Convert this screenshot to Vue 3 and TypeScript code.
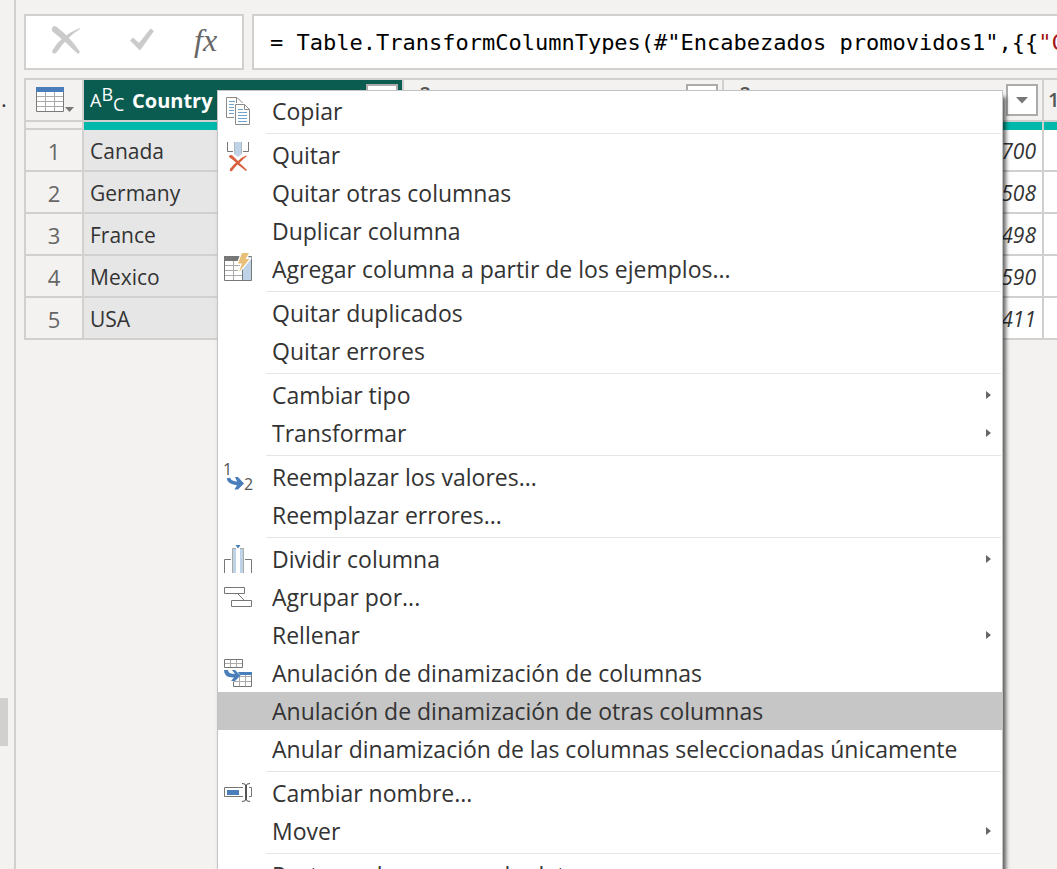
<script setup lang="ts">
interface MenuItem {
  label: string
  icon?: string
  submenu?: boolean
  active?: boolean
}

const formulaStart = '= Table.TransformColumnTypes(#"Encabezados promovidos1",{{'
const formulaString = '"Country"'

const groups: MenuItem[][] = [
  [{ label: 'Copiar', icon: 'copy' }],
  [
    { label: 'Quitar', icon: 'remove' },
    { label: 'Quitar otras columnas' },
    { label: 'Duplicar columna' },
    { label: 'Agregar columna a partir de los ejemplos...', icon: 'examples' },
  ],
  [{ label: 'Quitar duplicados' }, { label: 'Quitar errores' }],
  [
    { label: 'Cambiar tipo', submenu: true },
    { label: 'Transformar', submenu: true },
  ],
  [{ label: 'Reemplazar los valores...', icon: 'replace' }, { label: 'Reemplazar errores...' }],
  [
    { label: 'Dividir columna', icon: 'split', submenu: true },
    { label: 'Agrupar por...', icon: 'group' },
    { label: 'Rellenar', submenu: true },
    { label: 'Anulación de dinamización de columnas', icon: 'unpivot' },
    { label: 'Anulación de dinamización de otras columnas', active: true },
    { label: 'Anular dinamización de las columnas seleccionadas únicamente' },
  ],
  [
    { label: 'Cambiar nombre...', icon: 'rename' },
    { label: 'Mover', submenu: true },
  ],
  [{ label: 'Rastrear desagrupando datos' }],
]

const rows = [
  { country: 'Canada', value: '700' },
  { country: 'Germany', value: '508' },
  { country: 'France', value: '498' },
  { country: 'Mexico', value: '590' },
  { country: 'USA', value: '411' },
]
</script>

<template>
  <div class="app">
    <aside class="side">
      <span class="side-text">.</span>
      <div class="thumb"></div>
    </aside>
    <main class="main">
      <div class="bar">
        <div class="tools">
          <button type="button" aria-label="Cancelar">
            <svg width="36" height="32" viewBox="0 0 36 32">
              <path d="M4 4Q6 0 10 4Q23 14 32 28L30 30Q18 18 4 7ZM32 5Q18 14 9 28Q5 32 4 27Q13 11 32 4Z" fill="#cbcbcb" />
            </svg>
          </button>
          <button type="button" aria-label="Aceptar">
            <svg width="30" height="32" viewBox="0 0 30 32">
              <path d="M6 16.500L9 13.500L15 19L26.500 4.500L30 7L16 26.500Z" fill="#cbcbcb" />
            </svg>
          </button>
          <button type="button" class="fx" aria-label="Insertar paso">fx</button>
        </div>
        <div class="formula" role="textbox" aria-label="Fórmula"><code>{{ formulaStart }}<span class="str">{{ formulaString }}</span></code></div>
      </div>

      <table class="grid">
        <colgroup>
          <col class="c-index" /><col class="c-data" /><col class="c-data" /><col class="c-data" /><col class="c-data" />
        </colgroup>
        <thead>
          <tr class="head">
            <th>
              <button type="button" class="corner" aria-label="Opciones de tabla">
                <svg width="40" height="28" viewBox="0 0 40 28">
                  <path d="M2.500 2.500H29.500V25.500H2.500Z" fill="#fff" stroke="#7a7a7a" />
                  <path d="M3 10.500H29M3 15.500H29M3 20.500H29M11.500 6V25M20.500 6V25" stroke="#aaa" fill="none" />
                  <path d="M2 1H30V6H2Z" fill="#4a7ebb" />
                  <path d="M31 21H40L35.500 26Z" fill="#777" />
                </svg>
              </button>
            </th>
            <th class="selected">
              <div class="cell-head">
                <span class="type"><i>A</i><i class="up">B</i><i class="down">C</i></span>
                <span class="name">Country</span>
                <button type="button" class="drop" aria-label="Filtrar Country"></button>
              </div>
            </th>
            <th v-for="n in 3" :key="n">
              <div class="cell-head">
                <span class="type num"><i>1</i><i class="up">2</i><i class="down">3</i></span>
                <button type="button" class="drop" aria-label="Filtrar columna">
                  <svg width="12" height="7" viewBox="0 0 12 7"><path d="M0 0H12L6 6.500Z" fill="#777" /></svg>
                </button>
              </div>
            </th>
          </tr>
          <tr class="quality">
            <td></td><td></td><td></td><td></td><td></td>
          </tr>
        </thead>
        <tbody>
          <tr v-for="(row, i) in rows" :key="row.country">
            <th scope="row">{{ i + 1 }}</th>
            <td class="picked">{{ row.country }}</td>
            <td></td>
            <td class="value">{{ row.value }}</td>
            <td></td>
          </tr>
        </tbody>
      </table>
    </main>

    <div class="menu" role="menu">
      <div v-for="(group, g) in groups" :key="g" class="group" role="group">
        <button
          v-for="item in group"
          :key="item.label"
          type="button"
          role="menuitem"
          class="item"
          :class="{ active: item.active }"
        >
          <svg class="icon" width="36" height="38" viewBox="0 0 36 38" fill="none">
            <g v-if="item.icon === 'copy'">
              <path d="M6.500 5.500H17L22.500 11V25.500H6.500Z" fill="#fff" stroke="#8a8a8a" />
              <path d="M16.500 5.500V11.500H22" stroke="#8a8a8a" />
              <path d="M9 9.500H15M9 12.500H15M9 15.500H15M9 18.500H15M9 21.500H15" stroke="#6fa3d0" />
              <path d="M15 12H25L30 17.500V33H15Z" fill="#fff" stroke="#fff" stroke-width="2" />
              <path d="M15.500 12.500H24.500L29.500 17.500V32.500H15.500Z" fill="#fff" stroke="#8a8a8a" />
              <path d="M24.500 12.500V17.500H29.500" stroke="#8a8a8a" />
              <path d="M18 17.500H23M18 20.500H27M18 23.500H27M18 26.500H27M18 29.500H27" stroke="#6fa3d0" />
            </g>
            <g v-else-if="item.icon === 'remove'">
              <path d="M7.500 6V15.500H13M28.500 6V15.500H23" stroke="#777" />
              <path d="M14 6H22V18L18 21L14 18Z" fill="#bfd3e8" />
              <path d="M14.500 6V17M21.500 6V17" stroke="#b0b8c0" />
              <path d="M9 20Q11 18 13 20L18 25Q22 21 26 19.500L27 20Q23 23 19.500 27Q24 31 27 34L26 35Q21 31 17.500 28.500Q14 32 12 35Q9 36 10 33Q13 29 16 26.500Q12 23 9 21Z" fill="#d9603f" />
            </g>
            <g v-else-if="item.icon === 'examples'">
              <path d="M4.500 6.500H31.500V30.500H4.500Z" fill="#fff" stroke="#777" />
              <path d="M22 7H31V30H22Z" fill="#bfd3e8" />
              <path d="M5 15.500H22M5 20.500H22M5 25.500H22M13.500 11V30" stroke="#aaa" />
              <path d="M22.500 11V30" stroke="#777" />
              <path d="M4 6H22V11H4Z" fill="#777" />
              <path d="M22 3H29L25.500 9H29.500L19 22L22 13.500H18Z" fill="#e8bf78" stroke="#fff" stroke-width="2.500" paint-order="stroke" />
            </g>
            <g v-else-if="item.icon === 'replace'">
              <text x="3" y="17" class="digit">1</text>
              <text x="24" y="32" class="digit">2</text>
              <path d="M8.500 20Q9 25.500 21 25.500" stroke="#4a7ebb" stroke-width="3.500" />
              <path d="M15 19H18L24 25.500L18 31.500H14.500L18 25.500Z" fill="#4a7ebb" />
            </g>
            <g v-else-if="item.icon === 'split'">
              <path d="M4.500 33V19.500H11M31.500 33V19.500H25" stroke="#777" />
              <path d="M12 8H16V33H12ZM20 8H24V33H20Z" fill="#bfd3e8" />
              <path d="M12.500 33V8.500H16M23.500 33V8.500H20" stroke="#aaa" />
              <path d="M15.500 5H20.500L18 8.500Z" fill="#4a7ebb" />
            </g>
            <g v-else-if="item.icon === 'group'" stroke="#777">
              <path d="M4.500 9.500H24.500V15.500H4.500ZM11.500 22.500H31.500V28.500H11.500ZM18 16L24.500 22.500" />
            </g>
            <g v-else-if="item.icon === 'unpivot'">
              <path d="M4.500 5.500H22.500V13.500H4.500Z" fill="#fff" stroke="#777" />
              <path d="M5 9.500H22M10.500 6V13M16.500 6V13" stroke="#aaa" />
              <path d="M13.500 27.500V32.500H31.500V19" stroke="#777" />
              <path d="M19 22.500H31M14 27.500H31M19.500 21V32M25.500 21V32" stroke="#aaa" />
              <path d="M18 18H32V21H20Z" fill="#4a7ebb" />
              <path d="M4 16H8Q8 20 15 20L12 16H15L20.500 21.500L15 27H11L14 23.500Q4 24 4 16Z" fill="#4a7ebb" />
            </g>
            <g v-else-if="item.icon === 'rename'">
              <path d="M23 13.500H4.500V22.500H23M29 13.500H31.500V22.500H29" stroke="#777" />
              <path d="M7 16H19V21H7Z" fill="#4a7ebb" />
              <path d="M26 11V26" stroke="#555" stroke-width="2" />
              <path d="M22 9.500Q26 9.500 26 12Q26 9.500 30 9.500M22 27.500Q26 27.500 26 25Q26 27.500 30 27.500" stroke="#555" />
            </g>
          </svg>
          <span class="label">{{ item.label }}</span>
          <svg v-if="item.submenu" width="5" height="8" viewBox="0 0 5 8"><path d="M0 0L5 4L0 8Z" fill="#666" /></svg>
        </button>
      </div>
    </div>
  </div>
</template>

<style>
body {
  margin: 0;
  background: #f3f2f0;
}
</style>

<style scoped>
* {
  box-sizing: border-box;
}
button {
  margin: 0;
  padding: 0;
  border: 0;
  background: none;
  font: inherit;
  color: inherit;
}
.app {
  position: relative;
  display: flex;
  height: 100vh;
  overflow: hidden;
  background: #f3f2f0;
  font-family: "Open Sans", "Noto Sans", sans-serif;
  color: #333;
}
.side {
  position: relative;
  flex: 0 0 16px;
  border-right: 2px solid #d1d0ce;
  padding-top: 82px;
  font-size: 22px;
  line-height: 32px;
}
.side-text {
  padding-left: 1px;
}
.thumb {
  position: absolute;
  left: 0;
  top: 698px;
  width: 8px;
  height: 48px;
  background: #d1d0ce;
}
.main {
  flex: 1;
  min-width: 0;
  overflow: hidden;
  padding: 14px 0 0 8px;
}
.bar {
  display: flex;
  gap: 8px;
  height: 56px;
  margin-bottom: 8px;
}
.tools {
  flex: 0 0 220px;
  display: flex;
  gap: 40px;
  align-items: center;
  padding: 0 0 4px 22px;
  border: 2px solid #d1d0ce;
  background: #fff;
}
.tools svg {
  display: block;
}
.fx {
  font: italic 32px/36px "Liberation Serif", serif;
  color: #666;
}
.formula {
  flex: 1;
  min-width: 0;
  overflow: hidden;
  border: 2px solid #d1d0ce;
  border-right: 0;
  background: #fff;
  padding-left: 16px;
  line-height: 54px;
  white-space: pre;
  color: #000;
}
.formula code {
  font-family: "DejaVu Sans Mono", monospace;
  font-size: 22px;
}
.str {
  color: #a31515;
}
.grid {
  table-layout: fixed;
  width: 1340px;
  border-spacing: 0;
  border-left: 2px solid #d1d0ce;
  border-top: 2px solid #d1d0ce;
  font-size: 21px;
}
.c-index {
  width: 58px;
}
.c-data {
  width: 320px;
}
.grid th,
.grid td {
  height: 42px;
  padding: 0;
  border-right: 2px solid #d1d0ce;
  border-bottom: 2px solid #d1d0ce;
  background: #fff;
  text-align: left;
  line-height: 38px;
}
.grid th {
  background: #f3f2f0;
  font-weight: 400;
}
.grid tbody th {
  padding-top: 2px;
  text-align: center;
  font-size: 22px;
  color: #666;
}
.grid td {
  padding: 2px 6px 0;
}
.grid .quality td {
  height: 8px;
  padding: 0;
  border-bottom: 0;
  background: #01b8aa;
}
.grid .quality td:first-child {
  background: #f3f2f0;
  border-bottom: 2px solid #d1d0ce;
}
.grid .picked {
  background: #e6e6e6;
}
.grid .value {
  text-align: right;
  font-style: italic;
}
.grid .selected {
  background: #0b5c50;
  color: #fff;
}
.corner {
  display: block;
  margin-left: 8px;
}
.corner svg {
  display: block;
}
.cell-head {
  display: flex;
  align-items: center;
  height: 40px;
  padding: 0 4px 0 6px;
}
.type {
  display: flex;
  width: 42px;
  padding-top: 4px;
  font-size: 18px;
  font-weight: 500;
  line-height: 22px;
}
.type i {
  font-style: normal;
}
.num {
  margin-left: -2px;
  color: #555;
  font-size: 20px;
  font-weight: 600;
}
.type .up {
  margin-top: -6px;
}
.type .down {
  margin-top: 4px;
}
.name {
  padding-top: 2px;
  font-size: 20px;
  font-weight: 700;
}
.drop {
  display: flex;
  align-items: center;
  justify-content: center;
  width: 32px;
  height: 32px;
  margin-left: auto;
  border: 2px solid #ababab;
  background: #fff;
}
.menu {
  position: absolute;
  left: 217px;
  top: 90px;
  width: 786px;
  padding: 1px 0;
  border: 1px solid #c4c4c4;
  background: #fff;
  box-shadow: 3px 7px 4px rgba(0, 0, 0, 0.6);
}
.group + .group::before {
  content: "";
  display: block;
  height: 1px;
  margin: 3px 1px 2px 48px;
  background: #e5e5e5;
}
.item {
  display: flex;
  align-items: center;
  width: 100%;
  height: 38px;
  padding: 0 11px 0 2px;
  font-size: 23px;
  line-height: 38px;
  text-align: left;
  white-space: nowrap;
}
.active {
  background: #c6c6c6;
}
.icon {
  flex: none;
  margin-right: 16px;
}
.label {
  flex: 1;
}
.digit {
  font: 500 16px "Open Sans", sans-serif;
  fill: #555;
}
</style>
